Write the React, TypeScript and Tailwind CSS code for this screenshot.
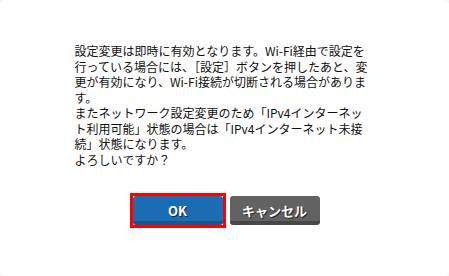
import React from "react";

const lines = [
  "設定変更は即時に有効となります。Wi-Fi経由で設定を",
  "行っている場合には、［設定］ボタンを押したあと、変",
  "更が有効になり、Wi-Fi接続が切断される場合がありま",
  "す。",
  "またネットワーク設定変更のため「IPv4インターネッ",
  "ト利用可能」状態の場合は「IPv4インターネット未接",
  "続」状態になります。",
  "よろしいですか？",
];

export default function App() {
  return (
    <div className="w-[449px] h-[276px] bg-[#f6f6f6] overflow-hidden">
      <div className="w-full h-full bg-white rounded-[5px] pt-[43px] flex flex-col items-center">
        <p
          className="w-[300px] text-[12px] leading-[15.5px] text-[#111] whitespace-nowrap"
          style={{ fontFamily: '"Noto Sans CJK JP", "Noto Sans", sans-serif' }}
        >
          {lines.map((l, i) => (
            <React.Fragment key={i}>
              {l}
              {i < lines.length - 1 && <br />}
            </React.Fragment>
          ))}
        </p>
        <div
          className="mt-[26px] flex items-center gap-[4px]"
          style={{ fontFamily: '"Noto Sans CJK JP", "Liberation Sans", sans-serif' }}
        >
          <div className="border-[3px] border-[#ff0000] flex">
            <button className="w-[90px] h-[29px] rounded-[3px] bg-[#1b6db3] border-b-[4px] border-[#17578f] text-white text-[13px] font-bold [text-shadow:1px_1px_1px_rgba(0,0,0,0.6)] flex items-center justify-center leading-none pt-[3px]">
              OK
            </button>
          </div>
          <button className="w-[90px] h-[29px] rounded-[3px] bg-[#626262] border-b-[4px] border-[#474747] text-white text-[13px] font-bold [text-shadow:1px_1px_1px_rgba(0,0,0,0.7)] flex items-center justify-center leading-none pt-[3px]">
            キャンセル
          </button>
        </div>
      </div>
    </div>
  );
}
